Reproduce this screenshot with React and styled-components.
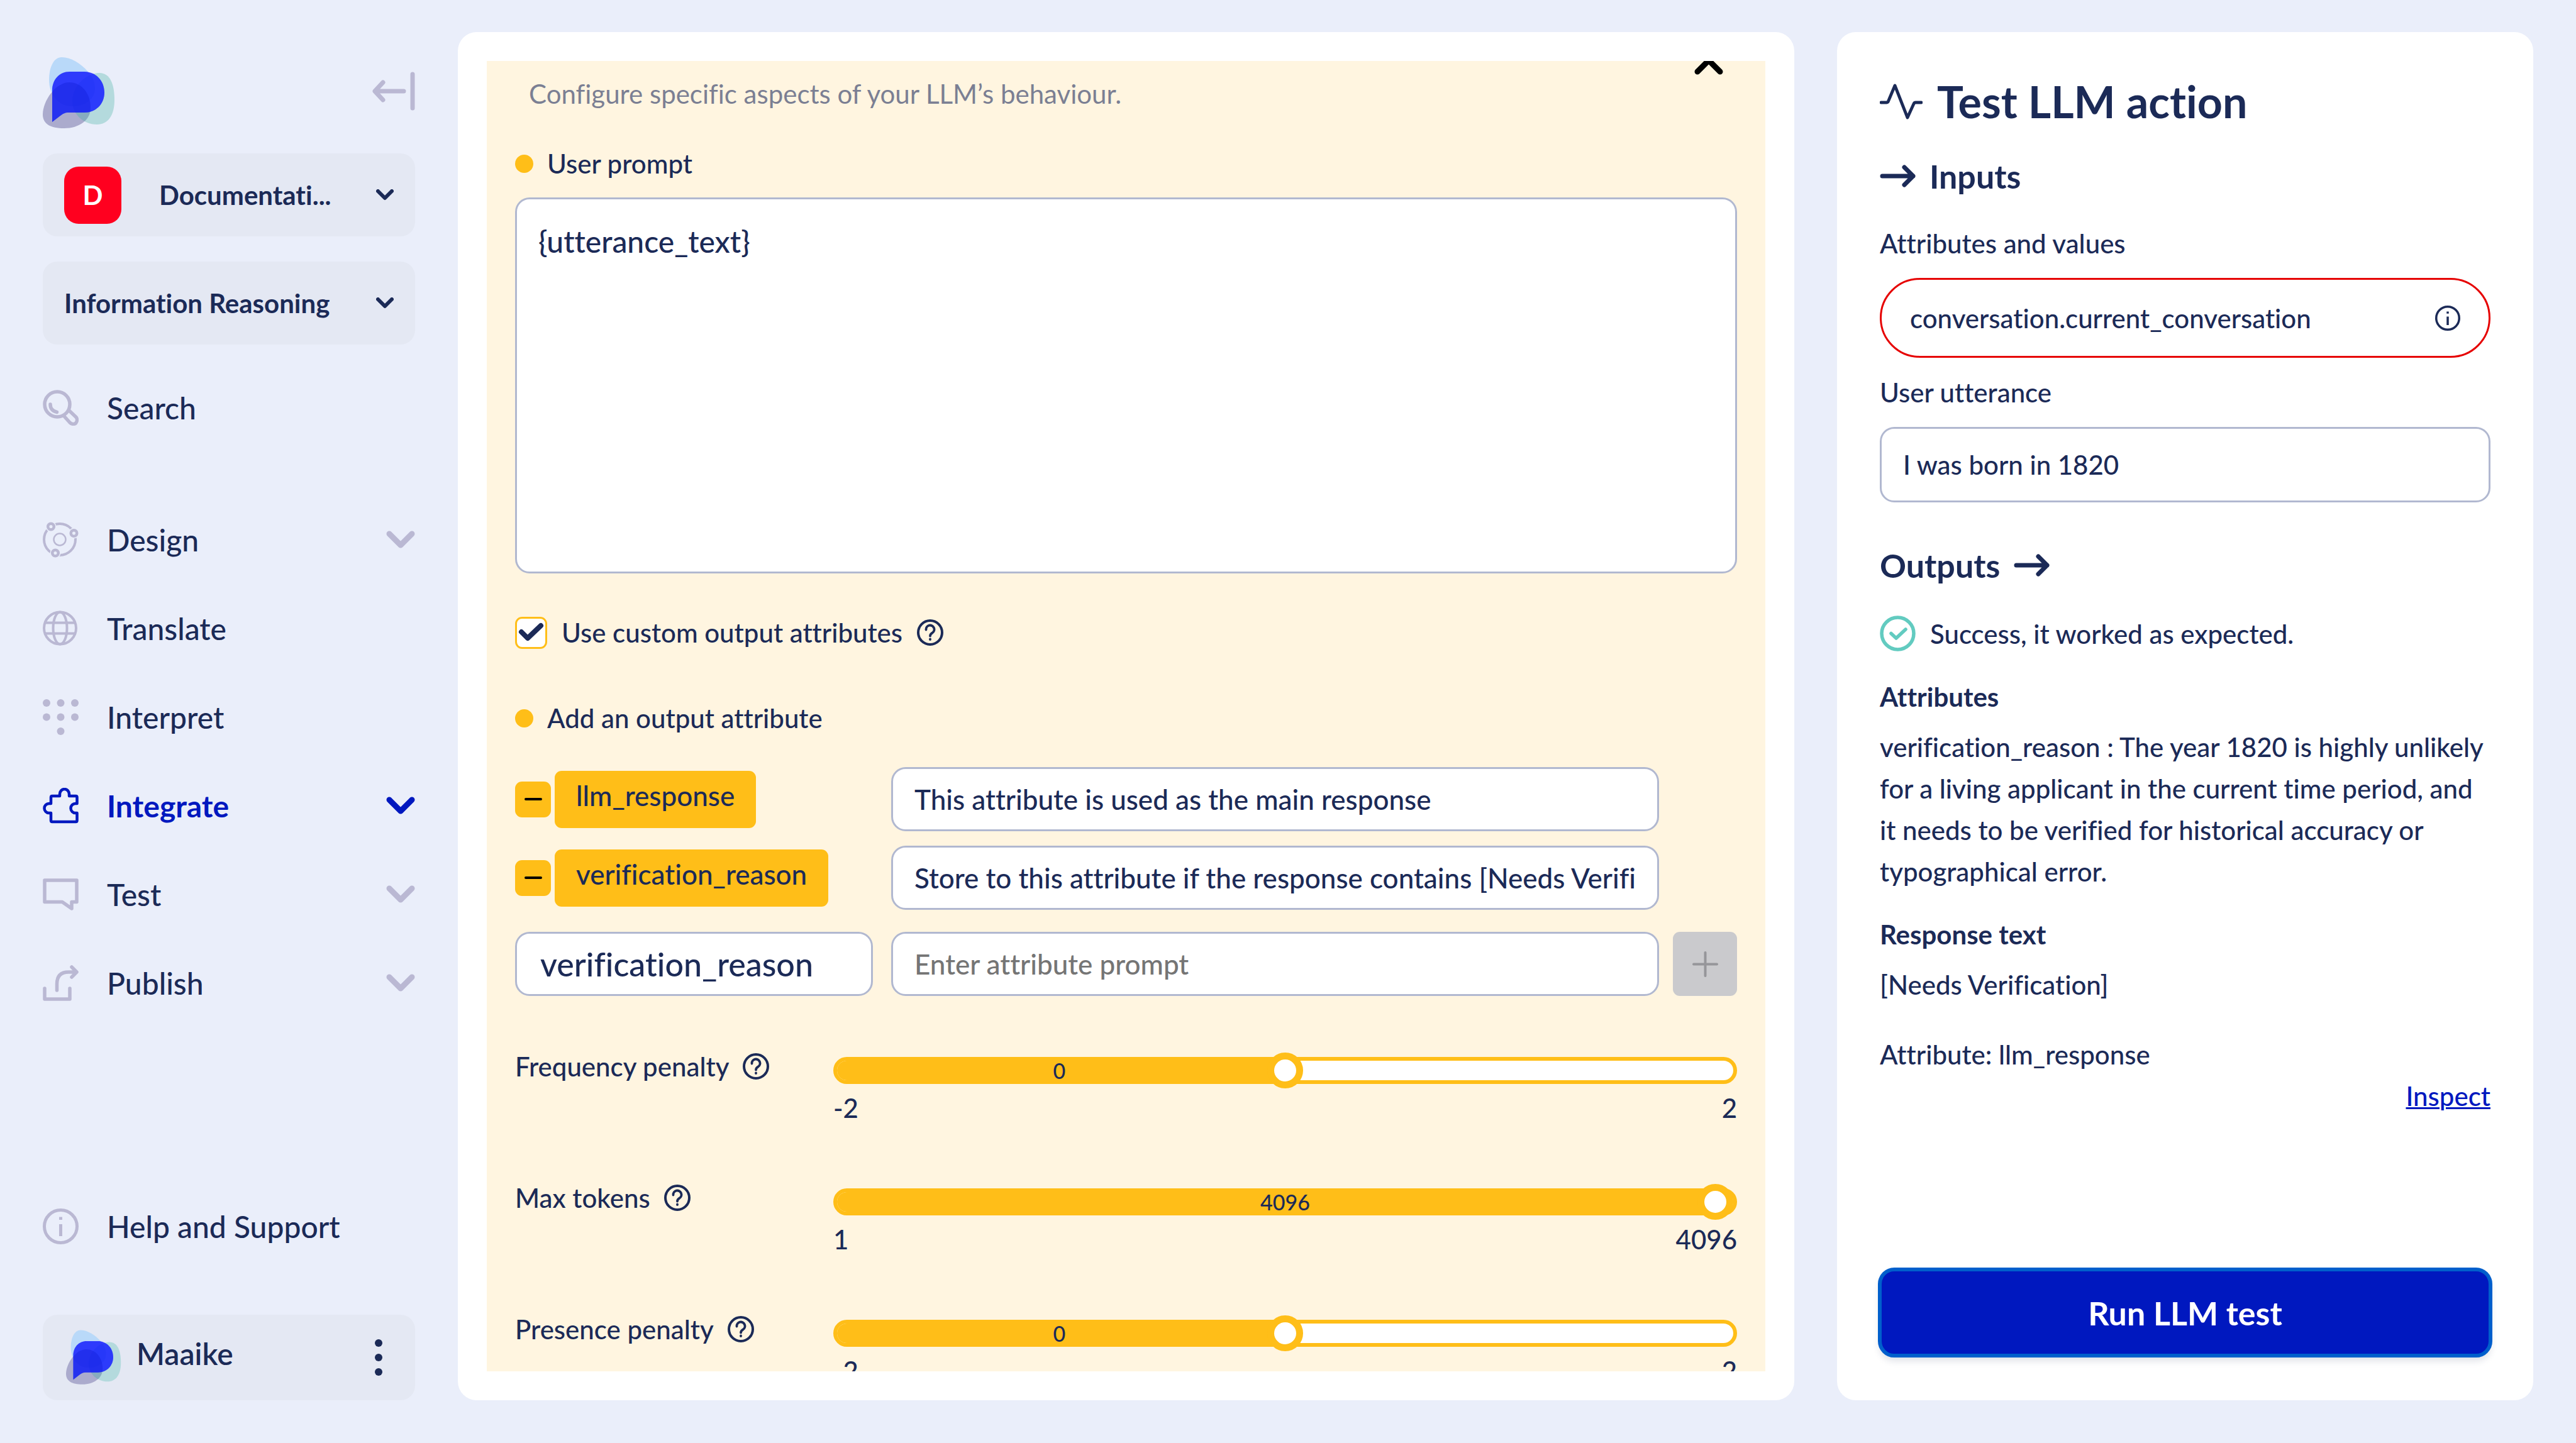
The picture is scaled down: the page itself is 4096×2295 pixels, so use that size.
import React, { useId, useState } from "react";
import styled, { createGlobalStyle } from "styled-components";

const color = {
  page: "#eaeefa",
  card: "#ffffff",
  chip: "#e4e8f3",
  ink: "#1b2a57",
  muted: "#7b7f93",
  lilac: "#bab8d3",
  outline: "#b1b8d0",
  amber: "#ffbe18",
  cream: "#fff5e0",
  blue: "#0018bf",
  focus: "#005fcc",
  danger: "#e60000",
  success: "#62cbc0",
};

const size = { xs: "34px", sm: "42px", input: "44px", md: "48px", lg: "52px", xl: "70px" };

const GlobalStyle = createGlobalStyle`
  * { box-sizing: border-box; }
  body {
    margin: 0;
    background: ${color.page};
    color: ${color.ink};
    font-family: Lato, "Open Sans", sans-serif;
    font-size: ${size.sm};
    font-weight: 500;
    font-variant-ligatures: none;
  }
  button, input, textarea, select {
    font: inherit;
    color: inherit;
    font-variant-ligatures: none;
  }
`;

const Page = styled.div`
  display: grid;
  grid-template-columns: 660px minmax(0, 1fr) 1107px;
  column-gap: 68px;
  height: 100vh;
  padding: 51px 68px 68px 0;
`;

const Svg = styled.svg`
  display: block;
  flex: none;
  fill: none;
  stroke: currentColor;
  stroke-linecap: round;
  stroke-linejoin: round;
`;

/* ---------- Sidebar ---------- */

const Sidebar = styled.aside`
  display: flex;
  flex-direction: column;
  padding: 40px 0 0 68px;
`;

const SidebarHead = styled.header`
  display: flex;
  justify-content: space-between;
  align-items: flex-start;
  margin-bottom: 39px;
`;

const IconButton = styled.button`
  padding: 0;
  border: 0;
  background: none;
  color: ${(p) => p.$color || "inherit"};
  cursor: pointer;
`;

const CollapseButton = styled(IconButton)`
  margin-top: 23px;
`;

const Picker = styled.div`
  display: flex;
  align-items: center;
  height: 132px;
  padding: 0 34px;
  margin-bottom: 40px;
  border-radius: 23px;
  background: ${color.chip};
`;

const Badge = styled.span`
  display: grid;
  place-items: center;
  width: 91px;
  height: 91px;
  margin-right: 60px;
  border-radius: 23px;
  background: #ff001f;
  color: #fff;
  font-weight: 700;
`;

const PickerSelect = styled.select`
  flex: 1;
  min-width: 0;
  padding: 0;
  border: 0;
  background: none;
  appearance: none;
  font-weight: 700;
`;

const Nav = styled.nav`
  display: flex;
  flex-direction: column;
  gap: 84px;
  margin-top: ${(p) => p.$top};
`;

const NavLink = styled.a`
  display: flex;
  align-items: center;
  height: 57px;
  gap: 45px;
  color: ${(p) => (p.$active ? color.blue : color.ink)};
  font-size: ${size.md};
  font-weight: ${(p) => (p.$active ? 700 : 500)};
  text-decoration: none;
`;

const NavIcon = styled.span`
  width: 57px;
  color: ${(p) => (p.$active ? color.blue : color.lilac)};
`;

const NavChevron = styled.span`
  margin-left: auto;
  color: ${(p) => (p.$active ? color.blue : color.lilac)};
`;

const SidebarFoot = styled.footer`
  display: flex;
  flex-direction: column;
  gap: 112px;
  margin-top: auto;
`;

const UserCard = styled.div`
  display: flex;
  align-items: center;
  justify-content: space-between;
  height: 136px;
  padding: 0 52px 0 37px;
  border-radius: 23px;
  background: ${color.chip};
`;

const UserName = styled.span`
  flex: 1;
  padding: 0 0 14px 24px;
  font-size: ${size.md};
  font-weight: 600;
`;

/* ---------- Settings card ---------- */

const Card = styled.main`
  display: flex;
  min-height: 0;
  padding: 46px;
  border-radius: 30px;
  background: ${color.card};
`;

const ScrollArea = styled.div`
  flex: 1;
  min-width: 0;
  overflow: hidden;
  padding: 0 45px;
  background: ${color.cream};
`;

const SectionHead = styled.div`
  display: flex;
  justify-content: space-between;
  align-items: flex-start;
  margin: -7px 22px 51px;
`;

const Hint = styled.p`
  margin: 29px 0 0;
  line-height: 60px;
  font-weight: 400;
  color: ${color.muted};
`;

const FieldLabel = styled.label`
  display: flex;
  align-items: center;
  gap: 22px;
  line-height: 60px;
  &::before {
    content: "";
    width: 29px;
    height: 29px;
    border-radius: 50%;
    background: ${color.amber};
  }
`;

const control = `
  display: block;
  width: 100%;
  border: 3px solid ${color.outline};
  border-radius: 23px;
  background: #fff;
  outline: 0;
`;

const PromptArea = styled.textarea`
  ${control}
  height: 598px;
  margin: 24px 0 64px;
  padding: 37px 34px;
  font-size: ${size.md};
  line-height: 60px;
  resize: none;
`;

const TextInput = styled.input`
  ${control}
  height: ${(p) => (p.$tall ? "120px" : "102px")};
  padding: 0 ${(p) => p.$inset || "34px"};
  font-size: ${(p) => p.$font || size.input};
  &::placeholder {
    color: #757575;
    opacity: 1;
  }
`;

const CheckRow = styled.div`
  display: flex;
  align-items: center;
  gap: 23px;
  height: 60px;
  margin-bottom: 76px;
`;

const CheckStack = styled.span`
  display: grid;
  & > * { grid-area: 1 / 1; }
  & > svg { pointer-events: none; }
`;

const CheckInput = styled.input`
  width: 51px;
  height: 51px;
  margin: 0;
  appearance: none;
  border: 3px solid ${color.amber};
  border-radius: 11px;
  background: #fff;
`;

const AttributeTable = styled.div`
  display: grid;
  grid-template-columns: 569px minmax(0, 1fr) 102px;
  align-items: center;
  gap: 23px 0;
  margin: 48px 0 82px;
`;

const AttributeName = styled.div`
  display: flex;
  align-items: center;
  gap: 6px;
  grid-column: 1;
`;

const RemoveButton = styled.button`
  display: grid;
  place-items: center;
  width: 57px;
  height: 57px;
  padding: 0;
  border: 0;
  border-radius: 11px;
  background: ${color.amber};
  color: #000;
`;

const Tag = styled.span`
  padding: 14px 34px 27px;
  border-radius: 11px;
  background: ${color.amber};
  font-size: ${size.input};
  line-height: 50px;
`;

const AttributePrompt = styled.div`
  grid-column: 2;
  padding: 0 22px 0 29px;
`;

const NewRow = styled.div`
  display: grid;
  grid-template-columns: subgrid;
  grid-column: 1 / -1;
  align-items: center;
  margin-top: 12px;
`;

const AddButton = styled.button`
  display: grid;
  place-items: center;
  height: 102px;
  padding: 0;
  border: 0;
  border-radius: 11px;
  background: #cacacd;
  color: #96969a;
`;

const Sliders = styled.div`
  display: flex;
  flex-direction: column;
  gap: 88px;
`;

const SliderRow = styled.div`
  display: grid;
  grid-template-columns: 506px minmax(0, 1fr);
`;

const SliderLabel = styled.div`
  display: flex;
  align-items: center;
  gap: 22px;
  height: 60px;
`;

const RangeStack = styled.div`
  display: grid;
  align-items: center;
  padding-top: 15px;
  & > * { grid-area: 1 / 1; }
`;

const Range = styled.input`
  width: 100%;
  height: 43px;
  margin: 0;
  appearance: none;
  border: 6px solid ${color.amber};
  border-radius: 22px;
  background: linear-gradient(to right, ${color.amber} ${(p) => p.$fill}%, #fff ${(p) => p.$fill}%) padding-box;
  &::-webkit-slider-thumb {
    appearance: none;
    width: 57px;
    height: 57px;
    border: 11px solid ${color.amber};
    border-radius: 50%;
    background: #fff;
  }
`;

const RangeValue = styled.output`
  pointer-events: none;
  text-align: center;
  font-size: ${size.xs};
  line-height: 43px;
`;

const RangeEnds = styled.div`
  display: flex;
  justify-content: space-between;
  margin-top: 13px;
  line-height: 50px;
`;

/* ---------- Test panel ---------- */

const Panel = styled.section`
  display: flex;
  flex-direction: column;
  padding: 70px 68px 71px;
  border-radius: 30px;
  background: ${color.card};
`;

const Title = styled.h1`
  display: flex;
  align-items: center;
  gap: 23px;
  margin: 0 0 49px;
  font-size: ${size.xl};
  line-height: 80px;
`;

const Heading = styled.h2`
  display: flex;
  align-items: center;
  gap: 22px;
  margin: 0;
  font-size: ${size.lg};
  line-height: 60px;
`;

const PanelLabel = styled.label`
  margin: ${(p) => p.$top} 0 30px;
  line-height: 50px;
`;

const AttributePill = styled.div`
  display: flex;
  align-items: center;
  justify-content: space-between;
  height: 127px;
  padding: 0 45px;
  border: 3px solid ${color.danger};
  border-radius: 64px;
`;

const PillInput = styled.input`
  flex: 1;
  min-width: 0;
  padding: 0;
  border: 0;
  outline: 0;
  background: none;
`;

const Status = styled.p`
  display: flex;
  align-items: center;
  gap: 23px;
  height: 57px;
  margin: 50px 0 47px;
`;

const Outputs = styled.div`
  margin-top: 70px;
`;

const SubHeading = styled.h3`
  margin: 0 0 22px;
  font-size: ${size.sm};
  line-height: 50px;
`;

const Paragraph = styled.p`
  margin: 0 0 ${(p) => p.$bottom || "0"};
  line-height: 66px;
`;

const InspectLink = styled.a`
  align-self: flex-end;
  line-height: 66px;
  color: ${color.blue};
  text-decoration-thickness: 3px;
`;

const RunButton = styled.button`
  height: 137px;
  margin-top: auto;
  border: 0;
  border-radius: 23px;
  background: ${color.blue};
  color: #fff;
  font-size: ${size.lg};
  font-weight: 700;
  outline: 6px solid ${color.focus};
  outline-offset: -3px;
  box-shadow: 0 8px 12px rgba(27, 42, 87, 0.15);
`;

/* ---------- Icons ---------- */

const SKY = "M30 0C45 0 60 10 71 22C80 32 83 40 83 50C83 68 65 78 47 78C25 78 10 60 10 36C10 15 18 0 30 0Z";
const TEAL = "M90 25C108 25 114 45 114 68C114 92 104 107 86 107C64 107 47 90 47 70C47 45 70 25 90 25Z";
const PLUM = "M42 40C62 40 76 58 76 80C76 100 58 113 34 113C12 113 0 106 0 91C0 70 20 40 42 40Z";
const BUBBLE = "M43 23H66C84 23 98 37 98 56C98 75 84 88 66 88H41C35 88 32 90 28 93L15 103V53C15 36 26 23 43 23Z";

function Logo({ width, height }) {
  const id = useId();
  return (
    <Svg width={width} height={height} viewBox="0 0 115 114" role="img" aria-label="Logo">
      <clipPath id={`${id}p`}><path d={PLUM} /></clipPath>
      <clipPath id={`${id}b`}><path d={BUBBLE} /></clipPath>
      <g strokeWidth="0">
        <path d={SKY} fill="#b9d9f9" />
        <path d={TEAL} fill="#b4dadd" />
        <path d={PLUM} fill="#ababcd" />
        <path d={TEAL} fill="#87acbf" clipPath={`url(#${id}p)`} />
        <path d={BUBBLE} fill="#3640ff" />
        <g clipPath={`url(#${id}b)`}>
          <path d={SKY} fill="#1f35f5" fillOpacity="0.35" />
          <path d={TEAL} fill="#1f35f5" fillOpacity="0.4" />
          <path d={PLUM} fill="#1422dc" fillOpacity="0.45" />
        </g>
      </g>
    </Svg>
  );
}

const CollapseIcon = () => (
  <Svg width="68" height="62" viewBox="0 0 68 62" strokeWidth="7">
    <path d="M64 4V58M50 31H5M17 17L4 31L17 45" />
  </Svg>
);

const SmallChevron = () => (
  <Svg width="28" height="18" viewBox="0 0 28 18" strokeWidth="6">
    <path d="M3 3L14 14L25 3" />
  </Svg>
);

const Chevron = ({ up }) => (
  <Svg width="46" height="29" viewBox="0 0 46 29" strokeWidth="9">
    <path d={up ? "M5 24L23 6L41 24" : "M5 5L23 23L41 5"} />
  </Svg>
);

const SearchIcon = () => (
  <Svg width="57" height="57" viewBox="0 0 57 57" strokeWidth="5.5">
    <circle cx="23" cy="23" r="20" />
    <path d="M12 23C12 30 16 34 22.500 35.500M34 42L43 52C46 55 50 55 52.500 53C55 50 55 46 53 43.500L42 33" />
  </Svg>
);

const DesignIcon = () => (
  <Svg width="57" height="57" viewBox="0 0 57 57" strokeWidth="4">
    <circle cx="27" cy="28" r="25" />
    <circle cx="27" cy="28" r="9.500" strokeWidth="2.500" />
    {[[13, 7.5], [49.5, 18], [20, 49.5]].map(([x, y]) => (
      <g key={x}>
        <circle cx={x} cy={y} r="8.500" fill={color.page} strokeWidth="0" />
        <circle cx={x} cy={y} r="4.800" fill={color.page} strokeWidth="4.500" />
      </g>
    ))}
  </Svg>
);

const GlobeIcon = () => (
  <Svg width="57" height="57" viewBox="0 0 57 57" strokeWidth="4">
    <circle cx="27.500" cy="28" r="25.500" />
    <ellipse cx="27.500" cy="28" rx="11" ry="25.500" />
    <path d="M4 19.500H51M4 36.500H51" />
  </Svg>
);

const DotsIcon = () => (
  <Svg width="57" height="57" viewBox="0 0 57 57" strokeWidth="0">
    {[[6, 6], [28.5, 6], [51, 6], [6, 28.5], [28.5, 28.5], [51, 28.5], [28.5, 51]].map(([x, y]) => (
      <circle key={`${x}-${y}`} cx={x} cy={y} r="6" fill="currentColor" />
    ))}
  </Svg>
);

const PuzzleIcon = () => (
  <Svg width="57" height="57" viewBox="0 0 57 57" strokeWidth="4.5">
    <path d="M13 25V15Q13 13 15 13H27V10A7.500 8 0 0 1 42 10V13H52.500Q54.500 13 54.500 15V25H52A7.500 7.500 0 0 0 52 40H54.500V52Q54.500 54 52.500 54H15Q13 54 13 52V40H10A7.500 7.500 0 0 1 10 25Z" />
  </Svg>
);

const SpeechIcon = () => (
  <Svg width="57" height="57" viewBox="0 0 57 57" strokeWidth="5.5">
    <path d="M3 6H54V40.500H46V51L31 40.500H3Z" />
  </Svg>
);

const PublishIcon = () => (
  <Svg width="57" height="57" viewBox="0 0 57 57" strokeWidth="5.5">
    <path d="M3 37V54H43V37M22.500 40V30C22.500 17 29 11 41 11H53M46 3L54 11L46 19" />
  </Svg>
);

const InfoIcon = ({ small }) => (
  <Svg width={small ? 40 : 57} height={small ? 40 : 57} viewBox="0 0 57 57" strokeWidth="5">
    <circle cx="28.500" cy="28.500" r="26" />
    <path d="M28.500 13.500V18M28.500 25V44" strokeLinecap="butt" />
  </Svg>
);

const HelpIcon = () => (
  <Svg width="42" height="42" viewBox="0 0 42 42" strokeWidth="4" role="img" aria-label="Help">
    <circle cx="21" cy="21" r="19" />
    <path d="M14.500 16.500A6.500 6.500 0 1 1 24.500 21.500C22 23 21 24 21 26.500M21 31.500V32" strokeWidth="3.800" />
  </Svg>
);

const PulseIcon = () => (
  <Svg width="68" height="57" viewBox="0 0 68 57" strokeWidth="4.8">
    <path d="M2 30H11Q13 30 13.500 28L24 3L44 54L54 32Q55 30 57 30H66" />
  </Svg>
);

const ArrowIcon = () => (
  <Svg width="57" height="36" viewBox="0 0 57 36" strokeWidth="7">
    <path d="M4 18H53M39 4L53 18L39 32" />
  </Svg>
);

const SuccessIcon = () => (
  <Svg width="57" height="57" viewBox="0 0 57 57" strokeWidth="5.5" color={color.success}>
    <circle cx="28.500" cy="28.500" r="25.500" />
    <path d="M18 28.500L26 36L41 22" />
  </Svg>
);

const CheckMark = () => (
  <Svg width="51" height="51" viewBox="0 0 51 51" strokeWidth="8">
    <path d="M10 24L20 34L41 14" />
  </Svg>
);

const MinusIcon = () => (
  <Svg width="28" height="4" viewBox="0 0 28 4" strokeWidth="4">
    <path d="M2 2H26" />
  </Svg>
);

const PlusIcon = () => (
  <Svg width="41" height="41" viewBox="0 0 41 41" strokeWidth="4">
    <path d="M2 20.500H39M20.500 2V39" />
  </Svg>
);

const MoreIcon = () => (
  <Svg width="12" height="58" viewBox="0 0 12 58" strokeWidth="0">
    {[6, 29, 52].map((y) => (
      <circle key={y} cx="6" cy={y} r="6" fill="currentColor" />
    ))}
  </Svg>
);

/* ---------- Parts ---------- */

const NAV = [
  { label: "Design", Icon: DesignIcon, expandable: true },
  { label: "Translate", Icon: GlobeIcon },
  { label: "Interpret", Icon: DotsIcon },
  { label: "Integrate", Icon: PuzzleIcon, expandable: true, active: true },
  { label: "Test", Icon: SpeechIcon, expandable: true },
  { label: "Publish", Icon: PublishIcon, expandable: true },
];

function NavItem({ label, Icon, expandable, active }) {
  return (
    <NavLink href={`#${label.toLowerCase().replace(/ /g, "-")}`} $active={active}>
      <NavIcon $active={active}><Icon /></NavIcon>
      <span>{label}</span>
      {expandable && <NavChevron $active={active}><Chevron /></NavChevron>}
    </NavLink>
  );
}

const ATTRIBUTES = [
  { name: "llm_response", prompt: "This attribute is used as the main response" },
  { name: "verification_reason", prompt: "Store to this attribute if the response contains [Needs Verification]" },
];

const SLIDERS = [
  { label: "Frequency penalty", min: -2, max: 2, start: 0 },
  { label: "Max tokens", min: 1, max: 4096, start: 4096 },
  { label: "Presence penalty", min: -2, max: 2, start: 0 },
];

function Slider({ label, min, max, start }) {
  const id = useId();
  const [value, setValue] = useState(start);
  const fill = ((value - min) / (max - min)) * 100;
  return (
    <SliderRow>
      <SliderLabel>
        <label htmlFor={id}>{label}</label>
        <HelpIcon />
      </SliderLabel>
      <div>
        <RangeStack>
          <Range
            id={id}
            type="range"
            min={min}
            max={max}
            value={value}
            $fill={fill}
            onChange={(e) => setValue(Number(e.target.value))}
          />
          <RangeValue htmlFor={id} style={{ width: `${fill}%` }}>{value}</RangeValue>
        </RangeStack>
        <RangeEnds><span>{min}</span><span>{max}</span></RangeEnds>
      </div>
    </SliderRow>
  );
}

export default function App() {
  return (
    <>
      <GlobalStyle />
      <Page>
        <Sidebar>
          <SidebarHead>
            <Logo width="115" height="114" />
            <CollapseButton $color={color.lilac} aria-label="Collapse sidebar"><CollapseIcon /></CollapseButton>
          </SidebarHead>
          <Picker>
            <Badge>D</Badge>
            <PickerSelect aria-label="Workspace"><option>Documentati...</option></PickerSelect>
            <SmallChevron />
          </Picker>
          <Picker>
            <PickerSelect aria-label="Project"><option>Information Reasoning</option></PickerSelect>
            <SmallChevron />
          </Picker>
          <Nav $top="32px"><NavItem label="Search" Icon={SearchIcon} /></Nav>
          <Nav $top="153px">
            {NAV.map((item) => <NavItem key={item.label} {...item} />)}
          </Nav>
          <SidebarFoot>
            <NavItem label="Help and Support" Icon={InfoIcon} />
            <UserCard>
              <Logo width="88" height="88" />
              <UserName>Maaike</UserName>
              <IconButton aria-label="Account menu"><MoreIcon /></IconButton>
            </UserCard>
          </SidebarFoot>
        </Sidebar>

        <Card>
          <ScrollArea>
            <SectionHead>
              <Hint>Configure specific aspects of your LLM’s behaviour.</Hint>
              <IconButton $color="#000" aria-label="Collapse section"><Chevron up /></IconButton>
            </SectionHead>
            <FieldLabel htmlFor="prompt">User prompt</FieldLabel>
            <PromptArea id="prompt" defaultValue="{utterance_text}" spellCheck={false} />
            <CheckRow>
              <CheckStack>
                <CheckInput type="checkbox" id="custom-output" defaultChecked />
                <CheckMark />
              </CheckStack>
              <label htmlFor="custom-output">Use custom output attributes</label>
              <HelpIcon />
            </CheckRow>
            <FieldLabel htmlFor="new-attribute">Add an output attribute</FieldLabel>
            <AttributeTable>
              {ATTRIBUTES.map((a) => (
                <React.Fragment key={a.name}>
                  <AttributeName>
                    <RemoveButton aria-label={`Remove ${a.name}`}><MinusIcon /></RemoveButton>
                    <Tag>{a.name}</Tag>
                  </AttributeName>
                  <AttributePrompt>
                    <TextInput defaultValue={a.prompt} aria-label={`${a.name} prompt`} />
                  </AttributePrompt>
                </React.Fragment>
              ))}
              <NewRow>
                <TextInput id="new-attribute" defaultValue="verification_reason" $font={size.lg} $inset="37px" />
                <AttributePrompt>
                  <TextInput placeholder="Enter attribute prompt" aria-label="Attribute prompt" />
                </AttributePrompt>
                <AddButton aria-label="Add attribute"><PlusIcon /></AddButton>
              </NewRow>
            </AttributeTable>
            <Sliders>
              {SLIDERS.map((s) => <Slider key={s.label} {...s} />)}
            </Sliders>
          </ScrollArea>
        </Card>

        <Panel>
          <Title><PulseIcon />Test LLM action</Title>
          <Heading><ArrowIcon />Inputs</Heading>
          <PanelLabel htmlFor="attribute-value" $top="52px">Attributes and values</PanelLabel>
          <AttributePill>
            <PillInput id="attribute-value" defaultValue="conversation.current_conversation" />
            <InfoIcon small />
          </AttributePill>
          <PanelLabel htmlFor="utterance" $top="30px">User utterance</PanelLabel>
          <TextInput id="utterance" $tall $font={size.sm} defaultValue="I was born in 1820" />
          <Outputs>
            <Heading>Outputs<ArrowIcon /></Heading>
            <Status><SuccessIcon />Success, it worked as expected.</Status>
            <SubHeading>Attributes</SubHeading>
            <Paragraph $bottom="42px">
              verification_reason : The year 1820 is highly unlikely for a living applicant in the current time
              period, and it needs to be verified for historical accuracy or typographical error.
            </Paragraph>
            <SubHeading>Response text</SubHeading>
            <Paragraph $bottom="45px">[Needs Verification]</Paragraph>
            <Paragraph>Attribute: llm_response</Paragraph>
          </Outputs>
          <InspectLink href="#inspect">Inspect</InspectLink>
          <RunButton type="button">Run LLM test</RunButton>
        </Panel>
      </Page>
    </>
  );
}
